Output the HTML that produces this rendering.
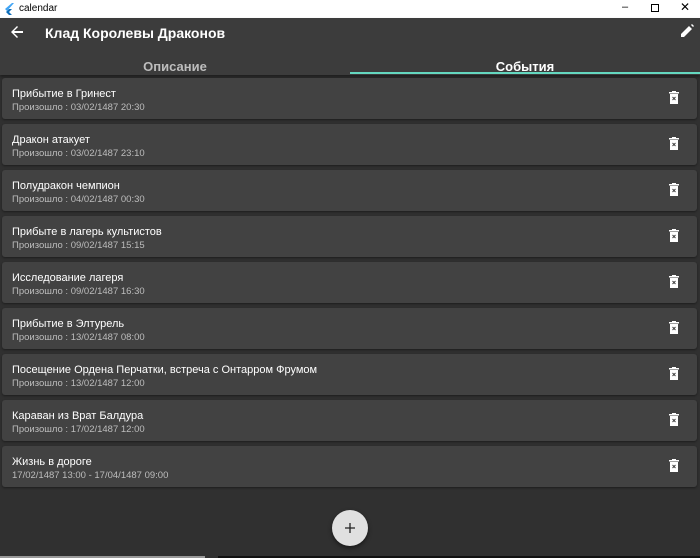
<!DOCTYPE html>
<html><head><meta charset="utf-8"><style>
*{margin:0;padding:0;box-sizing:border-box}
body{width:700px;height:558px;overflow:hidden;background:#303030;font-family:"Segoe UI","Liberation Sans",sans-serif;position:relative}
.tb{height:18px;background:#fff;position:relative;font-size:10px;color:#000}
.tb .t{position:absolute;left:19px;top:3px}
.ab{position:absolute;top:18px;left:0;width:700px;height:57px;background:#3c3c3c;box-shadow:0 2px 3px rgba(0,0,0,.4)}
.title{position:absolute;left:45px;top:7px;color:#fff;font-size:14px;font-weight:bold}
.tab{position:absolute;top:41px;width:350px;text-align:center;font-size:13px;font-weight:bold}
.ind{position:absolute;left:350px;top:54px;width:350px;height:2px;background:#64d8c0}
.card{position:absolute;left:2px;width:695px;height:41px;background:#424242;border-radius:3px;box-shadow:0 1px 2px rgba(0,0,0,.4)}
.card .a{position:absolute;left:10px;top:10px;color:#fff;font-size:11px}
.card .b{position:absolute;left:10px;top:24px;color:#bdbdbd;font-size:9.5px}
.card svg{position:absolute;left:667px;top:13px}
.fab{position:absolute;left:332px;top:510px;width:36px;height:36px;border-radius:50%;background:#e0e0e0;box-shadow:0 2px 4px rgba(0,0,0,.5)}
</style></head><body>
<div class="tb"><svg style="position:absolute;left:5px;top:3px" width="9" height="12" viewBox="0 0 9 12"><path d="M7 0L0 6l2 2 7-8z" fill="#42a5f5"/><path d="M4 6l3 0-3 3 3 3H4L1 9z" fill="#0d6db8"/></svg><span class="t">calendar</span>
<span style="position:absolute;left:622px;top:1px;font-size:11px">–</span>
<span style="position:absolute;left:651px;top:4px;width:8px;height:8px;border:1px solid #000"></span>
<span style="position:absolute;left:680px;top:0px;font-size:12px">✕</span></div>
<div class="ab">
<svg style="position:absolute;left:11px;top:8px" width="12" height="12" viewBox="0 0 12 12"><path d="M12 5H3l4-4-1-1-6 6 6 6 1-1-4-4h9z" fill="#fff"/></svg>
<div class="title">Клад Королевы Драконов</div>
<svg style="position:absolute;left:681px;top:6px" width="13" height="13" viewBox="0 0 13 13"><path d="M0 10v3h3l8-8-3-3zM12 3l-2-2 1-1 2 2z" fill="#fff"/></svg>
<div class="tab" style="left:0;color:#bdbdbd">Описание</div>
<div class="tab" style="left:350px;color:#fff">События</div>
<div class="ind"></div>
</div>
<div class="card" style="top:78px"><div class="a">Прибытие в Гринест</div><div class="b">Произошло : 03/02/1487 20:30</div><svg width="10" height="13" viewBox="0 0 10 13"><path d="M3 0h4v1h3v1.5H0V1h3zM1 3h8v10H1z" fill="#fff"/><path d="M3.5 6l3 3M6.5 6l-3 3" stroke="#424242" stroke-width="1"/></svg></div>
<div class="card" style="top:124px"><div class="a">Дракон атакует</div><div class="b">Произошло : 03/02/1487 23:10</div><svg width="10" height="13" viewBox="0 0 10 13"><path d="M3 0h4v1h3v1.5H0V1h3zM1 3h8v10H1z" fill="#fff"/><path d="M3.5 6l3 3M6.5 6l-3 3" stroke="#424242" stroke-width="1"/></svg></div>
<div class="card" style="top:170px"><div class="a">Полудракон чемпион</div><div class="b">Произошло : 04/02/1487 00:30</div><svg width="10" height="13" viewBox="0 0 10 13"><path d="M3 0h4v1h3v1.5H0V1h3zM1 3h8v10H1z" fill="#fff"/><path d="M3.5 6l3 3M6.5 6l-3 3" stroke="#424242" stroke-width="1"/></svg></div>
<div class="card" style="top:216px"><div class="a">Прибыте в лагерь культистов</div><div class="b">Произошло : 09/02/1487 15:15</div><svg width="10" height="13" viewBox="0 0 10 13"><path d="M3 0h4v1h3v1.5H0V1h3zM1 3h8v10H1z" fill="#fff"/><path d="M3.5 6l3 3M6.5 6l-3 3" stroke="#424242" stroke-width="1"/></svg></div>
<div class="card" style="top:262px"><div class="a">Исследование лагеря</div><div class="b">Произошло : 09/02/1487 16:30</div><svg width="10" height="13" viewBox="0 0 10 13"><path d="M3 0h4v1h3v1.5H0V1h3zM1 3h8v10H1z" fill="#fff"/><path d="M3.5 6l3 3M6.5 6l-3 3" stroke="#424242" stroke-width="1"/></svg></div>
<div class="card" style="top:308px"><div class="a">Прибытие в Элтурель</div><div class="b">Произошло : 13/02/1487 08:00</div><svg width="10" height="13" viewBox="0 0 10 13"><path d="M3 0h4v1h3v1.5H0V1h3zM1 3h8v10H1z" fill="#fff"/><path d="M3.5 6l3 3M6.5 6l-3 3" stroke="#424242" stroke-width="1"/></svg></div>
<div class="card" style="top:354px"><div class="a">Посещение Ордена Перчатки, встреча с Онтарром Фрумом</div><div class="b">Произошло : 13/02/1487 12:00</div><svg width="10" height="13" viewBox="0 0 10 13"><path d="M3 0h4v1h3v1.5H0V1h3zM1 3h8v10H1z" fill="#fff"/><path d="M3.5 6l3 3M6.5 6l-3 3" stroke="#424242" stroke-width="1"/></svg></div>
<div class="card" style="top:400px"><div class="a">Караван из Врат Балдура</div><div class="b">Произошло : 17/02/1487 12:00</div><svg width="10" height="13" viewBox="0 0 10 13"><path d="M3 0h4v1h3v1.5H0V1h3zM1 3h8v10H1z" fill="#fff"/><path d="M3.5 6l3 3M6.5 6l-3 3" stroke="#424242" stroke-width="1"/></svg></div>
<div class="card" style="top:446px"><div class="a">Жизнь в дороге</div><div class="b">17/02/1487 13:00 - 17/04/1487 09:00</div><svg width="10" height="13" viewBox="0 0 10 13"><path d="M3 0h4v1h3v1.5H0V1h3zM1 3h8v10H1z" fill="#fff"/><path d="M3.5 6l3 3M6.5 6l-3 3" stroke="#424242" stroke-width="1"/></svg></div>
<div class="fab"><svg style="position:absolute;left:12px;top:12px" width="12" height="12" viewBox="0 0 12 12"><path d="M6 1v10M1 6h10" stroke="#222" stroke-width="1.3"/></svg></div>
<div style="position:absolute;left:0;top:556px;width:205px;height:2px;background:#999"></div>
<div style="position:absolute;left:218px;top:556px;width:482px;height:2px;background:#111"></div>
</body></html>
